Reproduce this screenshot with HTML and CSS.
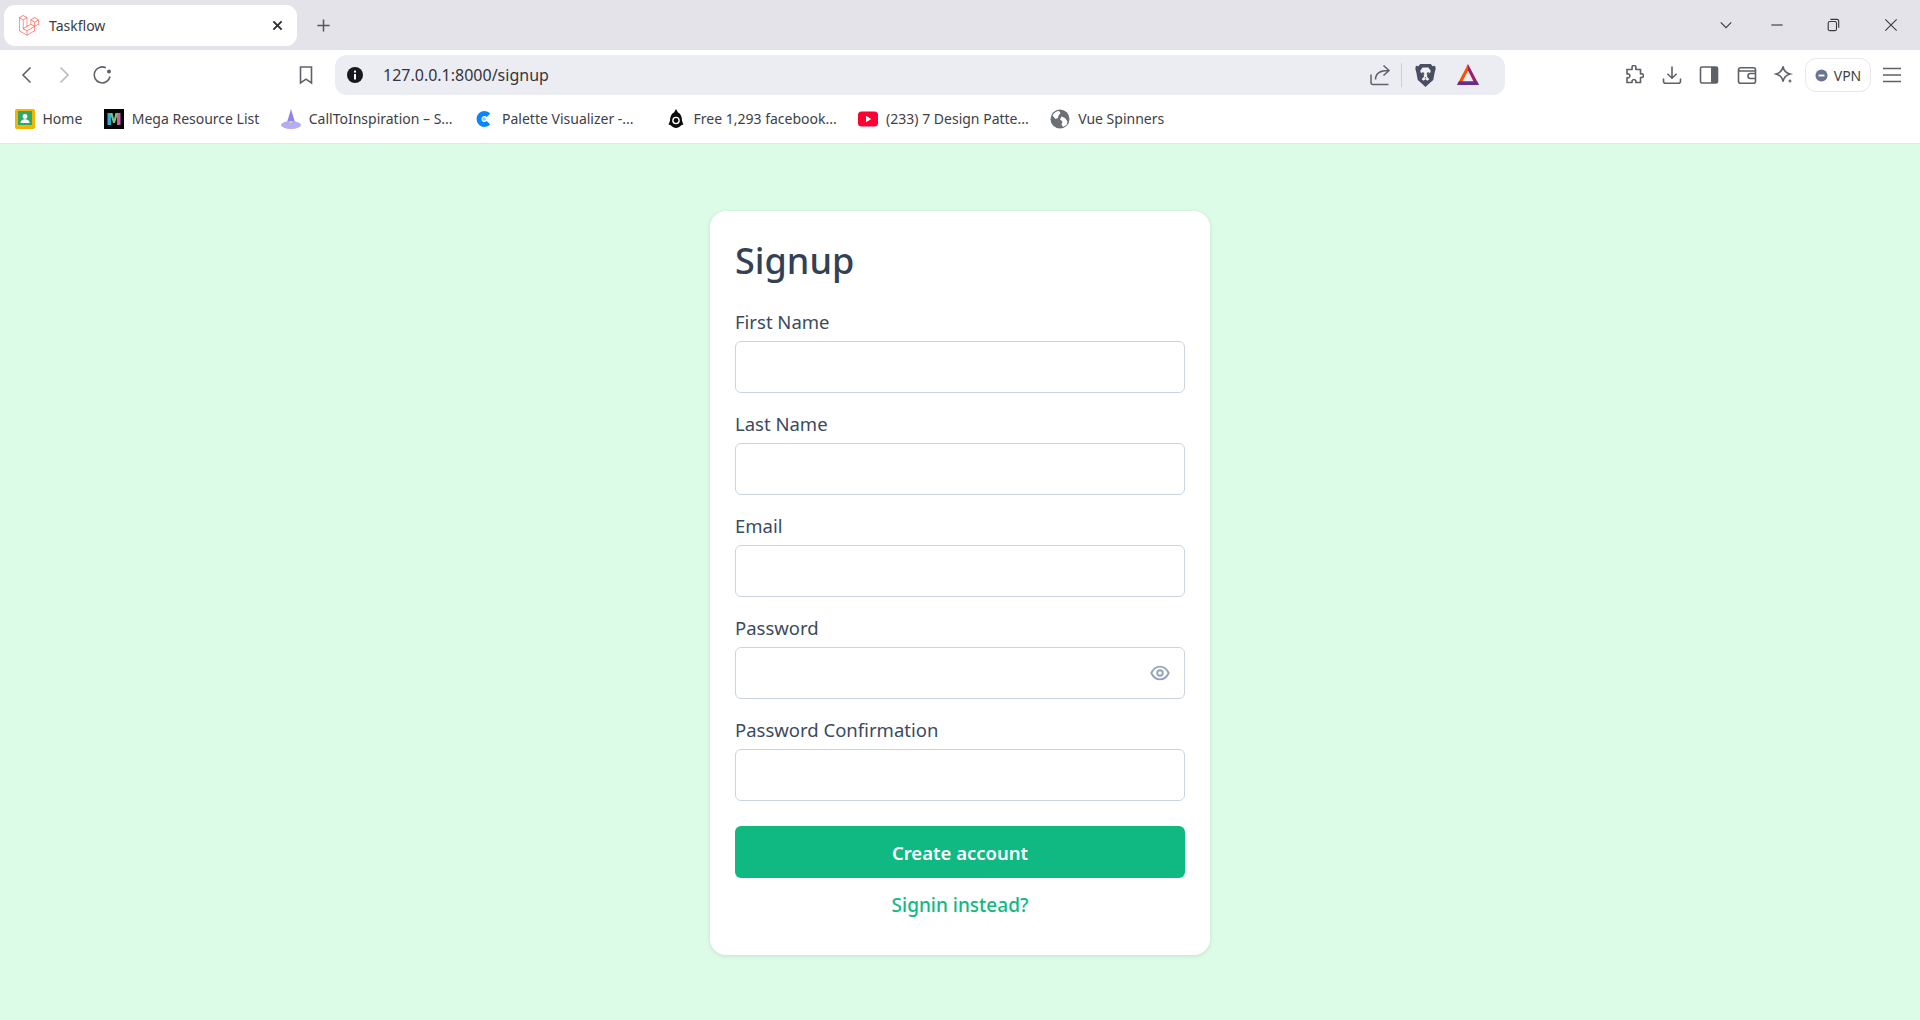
FILE: index.html
```html
<!DOCTYPE html>
<html lang="en">
<head>
  <meta charset="UTF-8" />
  <title>Taskflow</title>
  <link rel="stylesheet" href="styles.css">
</head>
<body>
  <header class="browser">
    <div class="tabstrip">
      <div class="tab">
        <svg class="favicon" viewBox="0 0 50 52"><path fill="#ff2d20" d="M49.626 11.564a.809.809 0 0 1 .028.209v10.972a.8.8 0 0 1-.402.694l-9.209 5.302V39.25c0 .286-.152.55-.4.694L20.42 51.01c-.044.025-.092.041-.14.058-.018.006-.035.017-.054.022a.805.805 0 0 1-.41 0c-.022-.006-.042-.018-.063-.026-.044-.016-.09-.03-.132-.054L.402 39.944A.801.801 0 0 1 0 39.25V6.334c0-.072.01-.142.028-.21.006-.023.02-.044.028-.067.015-.042.029-.085.051-.124.015-.026.037-.047.055-.071.023-.032.044-.065.071-.093.023-.023.053-.04.079-.06.029-.024.055-.05.088-.069h.001l9.61-5.533a.802.802 0 0 1 .8 0l9.61 5.533h.002c.032.02.059.045.088.068.026.02.055.038.078.06.028.029.048.062.072.094.017.024.04.045.054.071.023.04.036.082.052.124.008.023.022.044.028.068a.809.809 0 0 1 .028.209v20.559l8.008-4.611v-10.51c0-.07.01-.141.028-.208.007-.024.02-.045.028-.068.016-.042.03-.085.052-.124.015-.026.037-.047.054-.071.024-.032.044-.065.072-.093.023-.023.052-.04.078-.06.03-.024.056-.05.088-.069h.001l9.611-5.533a.801.801 0 0 1 .8 0l9.61 5.533c.034.02.06.045.09.068.025.02.054.038.077.06.028.029.048.062.072.094.018.024.04.045.054.071.023.039.036.082.052.124.009.023.022.044.028.068zm-1.574 10.718v-9.124l-3.363 1.936-4.646 2.675v9.124l8.01-4.611zm-9.61 16.505v-9.13l-4.57 2.61-13.05 7.448v9.216l17.62-10.144zM1.602 7.719v31.068L19.22 48.93v-9.214l-9.204-5.209-.003-.002-.004-.002c-.031-.018-.057-.044-.086-.066-.025-.02-.054-.036-.076-.058l-.002-.003c-.026-.025-.044-.056-.066-.084-.02-.027-.044-.05-.06-.078l-.001-.003c-.018-.03-.029-.066-.042-.1-.013-.03-.03-.058-.038-.09v-.001c-.01-.038-.012-.078-.016-.117-.004-.03-.012-.06-.012-.09v-.002-21.481L4.965 9.654 1.602 7.72zm8.81-5.994L2.405 6.334l8.005 4.609 8.006-4.61-8.006-4.608zm4.164 28.764l4.645-2.674V7.719l-3.363 1.936-4.646 2.675v20.096l3.364-1.937zM39.243 7.164l-8.006 4.609 8.006 4.609 8.005-4.61-8.005-4.608zm-.801 10.605l-4.646-2.675-3.363-1.936v9.124l4.645 2.674 3.364 1.937v-9.124zM20.02 38.33l11.743-6.704 5.87-3.35-8-4.606-9.211 5.303-8.395 4.833 7.993 4.524z"/></svg>
        <span class="tab-title">Taskflow</span>
        <svg class="tab-close" viewBox="0 0 12 12"><path d="M1.5 1.5l9 9M10.5 1.5l-9 9"/></svg>
      </div>
      <svg class="new-tab" viewBox="0 0 16 16"><path d="M8 1.5v13M1.5 8h13"/></svg>
      <div class="window-btns">
        <div class="win-btn wide"><svg viewBox="0 0 16 16"><path d="M2 5l6 6 6-6"/></svg></div>
        <div class="win-btn"><svg viewBox="0 0 16 16"><path d="M1.5 8h13"/></svg></div>
        <div class="win-btn"><svg viewBox="0 0 16 16"><rect x="2.5" y="4" width="9.5" height="10.5" rx="2"/><path d="M5 1.500h7.500a2 2 0 0 1 2 2V11"/></svg></div>
        <div class="win-btn close"><svg viewBox="0 0 16 16"><path d="M1.5 1.5l13 13M14.5 1.5l-13 13"/></svg></div>
      </div>
    </div>

    <div class="toolbar">
      <div class="nav-btn"><svg viewBox="0 0 20 20"><path d="M13.5 2.5L6 10l7.500 7.500"/></svg></div>
      <div class="nav-btn off"><svg viewBox="0 0 20 20"><path d="M6.5 2.5L14 10l-7.500 7.500"/></svg></div>
      <div class="nav-btn"><svg viewBox="0 0 20 20"><path d="M18 11.500A8 8 0 1 1 13.800 2.800"/><circle class="solid" cx="17" cy="6.500" r="2"/></svg></div>
      <div class="nav-btn bookmark-btn"><svg viewBox="0 0 20 20"><path d="M4.500 2h11v16L10 14.200 4.500 18z"/></svg></div>

      <div class="urlbar">
        <svg class="info" viewBox="0 0 18 18"><circle cx="9" cy="9" r="8" fill="#17171c"/><rect x="8" y="8" width="2" height="5.500" fill="#fff"/><rect x="8" y="4.600" width="2" height="2" fill="#fff"/></svg>
        <span class="url">127.0.0.1:8000/signup</span>
        <svg class="share" viewBox="0 0 22 22"><path d="M2 10.500V18.500a2 2 0 0 0 2 2h15.500M6.500 15.500C6.500 10 10.500 6.500 19.500 6.500M14.500 1.500l5.500 5-5.500 5"/></svg>
        <span class="divider"></span>
        <svg class="brave" viewBox="0 0 22 26"><path fill="#484d63" d="M5.500 1h11l2 2.200 2.500-.4.700 3-1 3.600-1.600 8.300-4.200 3.700L11 25l-3.900-3.600-4.200-3.700L1.300 9.400l-1-3.600.7-3 2.500.4z"/><path fill="#fff" d="M8 4.500h6l2.500 3.500-.5 2-3 1.500-.5 2.500 2.500 3-2 1.500-2-1.500-2 1.500-2-1.500 2.500-3-.5-2.500-3-1.500-.5-2zM11 14.500l-1.200 1.500h2.400z" opacity=".92"/><path fill="#484d63" d="M6.800 9.300l2.700.8.300 1.900-1.900-.7zM15.200 9.300l-2.700.8-.3 1.900 1.900-.7z"/></svg>
        <svg class="bat" viewBox="0 0 24 24"><path fill="#ff5000" d="M12 1L1 22l5.500-3.500L12 7.500z"/><path fill="#9e1f63" d="M12 1l11 21-5.500-3.500L12 7.500z"/><path fill="#662d91" d="M1 22h22l-2-3.700H3z"/><path fill="#ff4724" d="M12 1l-1.200 2.300L12 7.500z"/></svg>
      </div>

      <div class="nav-btn ext-first"><svg viewBox="0 0 20 20"><path d="M8 2.500a2 2 0 0 1 4 0c0 1-.5 1.500 0 2h4.500v4.300c.6.500 1-.3 1.700 0a2 2 0 0 1 0 3.700c-.7.300-1.100-.5-1.700 0v5h-4.600c-.5-.7.300-1-.1-1.800a2 2 0 0 0-3.700 0c-.4.800.4 1.100-.1 1.800H3v-4.700c.7-.5 1 .2 1.700-.1a2 2 0 0 0 0-3.700C4 8.700 3.700 9.300 3 8.800V4.500h5c.4-.6 0-1.100 0-2z"/></svg></div>
      <div class="nav-btn"><svg viewBox="0 0 20 20"><path d="M10 1.500V13M5.500 8.800L10 13.200l4.500-4.400M1.500 13.500v2.700a2 2 0 0 0 2 2h13a2 2 0 0 0 2-2v-2.700"/></svg></div>
      <div class="nav-btn"><svg viewBox="0 0 20 20"><rect x="1.500" y="2" width="17" height="16" rx="1.500"/><rect class="solid" x="12" y="2" width="6.500" height="16"/></svg></div>
      <div class="nav-btn"><svg viewBox="0 0 20 20"><path d="M18.500 6V4.800a2 2 0 0 0-2-2H3.500a2 2 0 0 0-2 2v11.500a2 2 0 0 0 2 2h13a2 2 0 0 0 2-2V6H3.500a2 2 0 0 1-2-1.500"/><path d="M18.500 8.500h-5a2 2 0 0 0 0 5h5"/></svg></div>
      <div class="nav-btn"><svg viewBox="0 0 20 20"><path d="M9 1.500c.8 4.500 2.500 6.300 7 7.500-4.500 1.200-6.200 3-7 7.500-.8-4.500-2.500-6.300-7-7.500 4.500-1.200 6.200-3 7-7.500z"/><path class="solid" d="M16 13.500c.3 1.700.8 2.200 2.500 2.500-1.700.3-2.200.8-2.500 2.500-.3-1.700-.8-2.200-2.500-2.500 1.700-.3 2.200-.8 2.500-2.500z"/></svg></div>
      <div class="vpn">
        <svg viewBox="0 0 14 14"><circle cx="7" cy="7" r="6.500" fill="#6b7394"/><rect x="3.800" y="6" width="6.400" height="2" fill="#fff"/></svg>
        <span>VPN</span>
      </div>
      <div class="nav-btn menu-btn"><svg viewBox="0 0 20 20"><path d="M1 3.500h18M1 10h18M1 16.500h18"/></svg></div>
    </div>

    <div class="bookmarks">
      <div class="bm">
        <svg viewBox="0 0 20 20"><rect width="20" height="20" rx="2" fill="#f4b400"/><rect x="3" y="2" width="14" height="14" fill="#2fa866"/><circle cx="10" cy="7.500" r="2.400" fill="#fff"/><path fill="#fff" d="M5.500 14c0-2.600 2-3.800 4.500-3.800s4.500 1.200 4.500 3.800z"/></svg>
        <span>Home</span>
      </div>
      <div class="bm">
        <svg viewBox="0 0 20 20"><rect width="20" height="20" fill="#050505"/><rect x="3.500" y="4" width="3.500" height="12" fill="#38a8c8"/><rect x="13" y="4" width="3.500" height="12" fill="#c85fa8"/><path d="M6 4h2.500L10 10l1.500-6H14l-3 10H9z" fill="#7fc07c"/></svg>
        <span>Mega Resource List</span>
      </div>
      <div class="bm">
        <svg viewBox="0 0 20 20"><path fill="#8f86ec" d="M10 0l4.500 15h-9z"/><ellipse cx="10" cy="16" rx="10" ry="4" fill="#b3adf2"/><circle cx="10" cy="13" r="1.200" fill="#f2d35e"/></svg>
        <span>CallToInspiration – S...</span>
      </div>
      <div class="bm long">
        <svg viewBox="0 0 20 20"><path fill="none" stroke="#0b84ff" stroke-width="5" d="M14.500 6.200a5.500 5.500 0 1 0 0 7.600"/><circle cx="10" cy="10" r="1.800" fill="#6ed0ff"/></svg>
        <span>Palette Visualizer -...</span>
      </div>
      <div class="bm">
        <svg viewBox="0 0 20 20"><path fill="#0c0c0c" d="M10 0l2 3.500c2.500 1 4 4 4 8 0 .8 1.500 4 1.500 4s-1.500 0-2.500 1c-1.500 1.500-3 2.500-5 2.500s-3.500-1-5-2.500c-1-1-2.500-1-2.500-1S4 12.300 4 11.500c0-4 1.500-7 4-8z"/><circle cx="10" cy="11.500" r="3.800" fill="#fff"/><circle cx="10" cy="11.500" r="2.400" fill="#0c0c0c"/></svg>
        <span>Free 1,293 facebook...</span>
      </div>
      <div class="bm">
        <svg viewBox="0 0 20 20"><rect y="2.500" width="20" height="15" rx="3.500" fill="#ff0033"/><path fill="#fff" d="M8 6.800l5.200 3.200L8 13.200z"/></svg>
        <span>(233) 7 Design Patte...</span>
      </div>
      <div class="bm">
        <svg viewBox="0 0 20 20"><circle cx="10" cy="10" r="9.500" fill="#6c7075"/><path fill="#fff" d="M2.500 6.500C4 3.500 6.500 2 9 2l1.500 2-2 2.500-.5 2.500-2.500 1zM17.500 12.500l-1 3.500-3.500 2-1.500-2.500 1-3-2.500-2 1.500-3 3.500 1.500z"/></svg>
        <span>Vue Spinners</span>
      </div>
    </div>
  </header>

  <main class="page">
    <form class="card">
      <h1>Signup</h1>

      <div class="field">
        <label for="first_name">First Name</label>
        <input type="text" id="first_name" name="first_name" />
      </div>
      <div class="field">
        <label for="last_name">Last Name</label>
        <input type="text" id="last_name" name="last_name" />
      </div>
      <div class="field">
        <label for="email">Email</label>
        <input type="email" id="email" name="email" />
      </div>
      <div class="field">
        <label for="password">Password</label>
        <div class="password-wrap">
          <input type="password" id="password" name="password" />
          <svg class="eye" viewBox="0 0 24 24"><path d="M2.500 12C4.800 7.300 8.100 5 12 5s7.200 2.300 9.500 7c-2.300 4.700-5.600 7-9.500 7s-7.200-2.300-9.500-7z"/><circle cx="12" cy="12" r="3"/></svg>
        </div>
      </div>
      <div class="field">
        <label for="password_confirmation">Password Confirmation</label>
        <input type="password" id="password_confirmation" name="password_confirmation" />
      </div>

      <button type="submit">Create account</button>
      <a class="signin" href="#">Signin instead?</a>
    </form>
  </main>
</body>
</html>
```

FILE: styles.css
```css
* {
  box-sizing: border-box;
}

html, body {
  height: 100%;
}

body {
  margin: 0;
  display: flex;
  flex-direction: column;
  font-family: "Noto Sans", "Open Sans", sans-serif;
  background: #dcfce7;
  overflow: hidden;
}

svg {
  display: block;
  flex-shrink: 0;
}

/* browser chrome */
.browser {
  background: #fff;
  border-bottom: 1px solid #d3f0de;
  padding-bottom: 5px;
}

.tabstrip {
  height: 50px;
  background: #e3e3e9;
  display: flex;
  align-items: flex-start;
  padding: 5px 0 0 4px;
}

.tab {
  width: 293px;
  height: 41px;
  background: #fff;
  border-radius: 11px;
  display: flex;
  align-items: center;
  padding: 0 14px 0 15px;
}

.favicon {
  width: 20px;
  height: 21px;
  opacity: 0.75;
}

.tab-title {
  margin-left: 10px;
  font-size: 14px;
  color: #3b3b42;
  flex: 1;
}

.tab-close {
  width: 11px;
  height: 11px;
  fill: none;
  stroke: #2c2c33;
  stroke-width: 2;
}

.new-tab {
  width: 15px;
  height: 15px;
  margin: 13px 0 0 19px;
  fill: none;
  stroke: #55555c;
  stroke-width: 1.6;
}

.window-btns {
  margin: -5px 0 0 auto;
  display: flex;
  height: 50px;
}

.win-btn {
  width: 56px;
  display: flex;
  align-items: center;
  justify-content: center;
}

.win-btn.wide {
  width: 46px;
}

.win-btn.close {
  width: 59px;
}

.win-btn svg {
  width: 14px;
  height: 14px;
  fill: none;
  stroke: #3a3a40;
  stroke-width: 1.3;
}

.toolbar {
  height: 50px;
  display: flex;
  align-items: center;
  padding-left: 8px;
}

.nav-btn {
  width: 37.5px;
  height: 40px;
  display: flex;
  align-items: center;
  justify-content: center;
}

.nav-btn svg {
  width: 20px;
  height: 20px;
  fill: none;
  stroke: #5f6168;
  stroke-width: 1.6;
}

.nav-btn .solid {
  fill: #5f6168;
  stroke: none;
}

.nav-btn.off svg {
  stroke: #b9b9be;
}

.bookmark-btn {
  margin-left: 167px;
}

.urlbar {
  width: 1170px;
  height: 40px;
  margin-left: 10px;
  background: #ecedf2;
  border-radius: 12px;
  display: flex;
  align-items: center;
  padding-left: 11px;
}

.info {
  width: 18px;
  height: 18px;
}

.url {
  margin-left: 19px;
  font-size: 16px;
  color: #35353b;
  flex: 1;
}

.share {
  width: 22px;
  height: 22px;
  fill: none;
  stroke: #5f6168;
  stroke-width: 1.5;
}

.divider {
  width: 1px;
  height: 24px;
  margin-left: 10px;
  background: #cfcfd4;
}

.brave {
  width: 21px;
  height: 25px;
  margin-left: 13px;
}

.bat {
  width: 24px;
  height: 24px;
  margin: 0 25px 0 20px;
}

.ext-first {
  margin-left: 110.5px;
}

.vpn {
  width: 66px;
  height: 34px;
  margin-left: 2px;
  border: 1px solid #e8e8ec;
  border-radius: 11px;
  display: flex;
  align-items: center;
  justify-content: center;
  gap: 6px;
  font-size: 14px;
  color: #3f3f46;
}

.vpn svg {
  width: 13px;
  height: 13px;
}

.menu-btn {
  margin-left: 2px;
}

.bookmarks {
  height: 38px;
  display: flex;
  align-items: center;
  gap: 21.4px;
  padding-left: 14.5px;
}

.bm {
  display: flex;
  align-items: center;
  gap: 8px;
  font-size: 14px;
  color: #404046;
  white-space: nowrap;
}

.bm span {
  padding-bottom: 2px;
}

.bm.long {
  padding-right: 10.5px;
}

.bm svg {
  width: 20px;
  height: 20px;
}

/* signup form */
.page {
  flex: 1;
  display: flex;
  justify-content: center;
  align-items: flex-start;
  padding-top: 67px;
}

.card {
  width: 500px;
  background: #fff;
  border-radius: 16px;
  padding: 25px 25px 38px;
  box-shadow: 0 1px 4px rgba(15, 23, 42, 0.12);
  display: flex;
  flex-direction: column;
}

h1 {
  margin: 0 0 24px;
  font-size: 36px;
  line-height: 50px;
  font-weight: 500;
  color: #334155;
}

.field {
  margin-bottom: 19px;
}

label {
  display: block;
  font-size: 18.5px;
  line-height: 24px;
  margin-bottom: 7px;
  color: #3b4a60;
}

input {
  display: block;
  width: 100%;
  height: 52px;
  padding: 0 16px;
  border: 1px solid #cbd5e1;
  border-radius: 6px;
  font-size: 18px;
  background: #fff;
}

.password-wrap {
  position: relative;
}

.eye {
  position: absolute;
  right: 14px;
  top: 15px;
  width: 22px;
  height: 22px;
  fill: none;
  stroke: #94a3b8;
  stroke-width: 2;
}

button {
  height: 52px;
  margin-top: 6px;
  border: none;
  border-radius: 6px;
  background: #10b981;
  color: #fff;
  font-family: inherit;
  font-size: 18.5px;
  font-weight: 600;
  cursor: pointer;
}

.signin {
  margin-top: 15px;
  text-align: center;
  font-size: 19px;
  line-height: 24px;
  font-weight: 500;
  color: #10b981;
  text-decoration: none;
}
```
